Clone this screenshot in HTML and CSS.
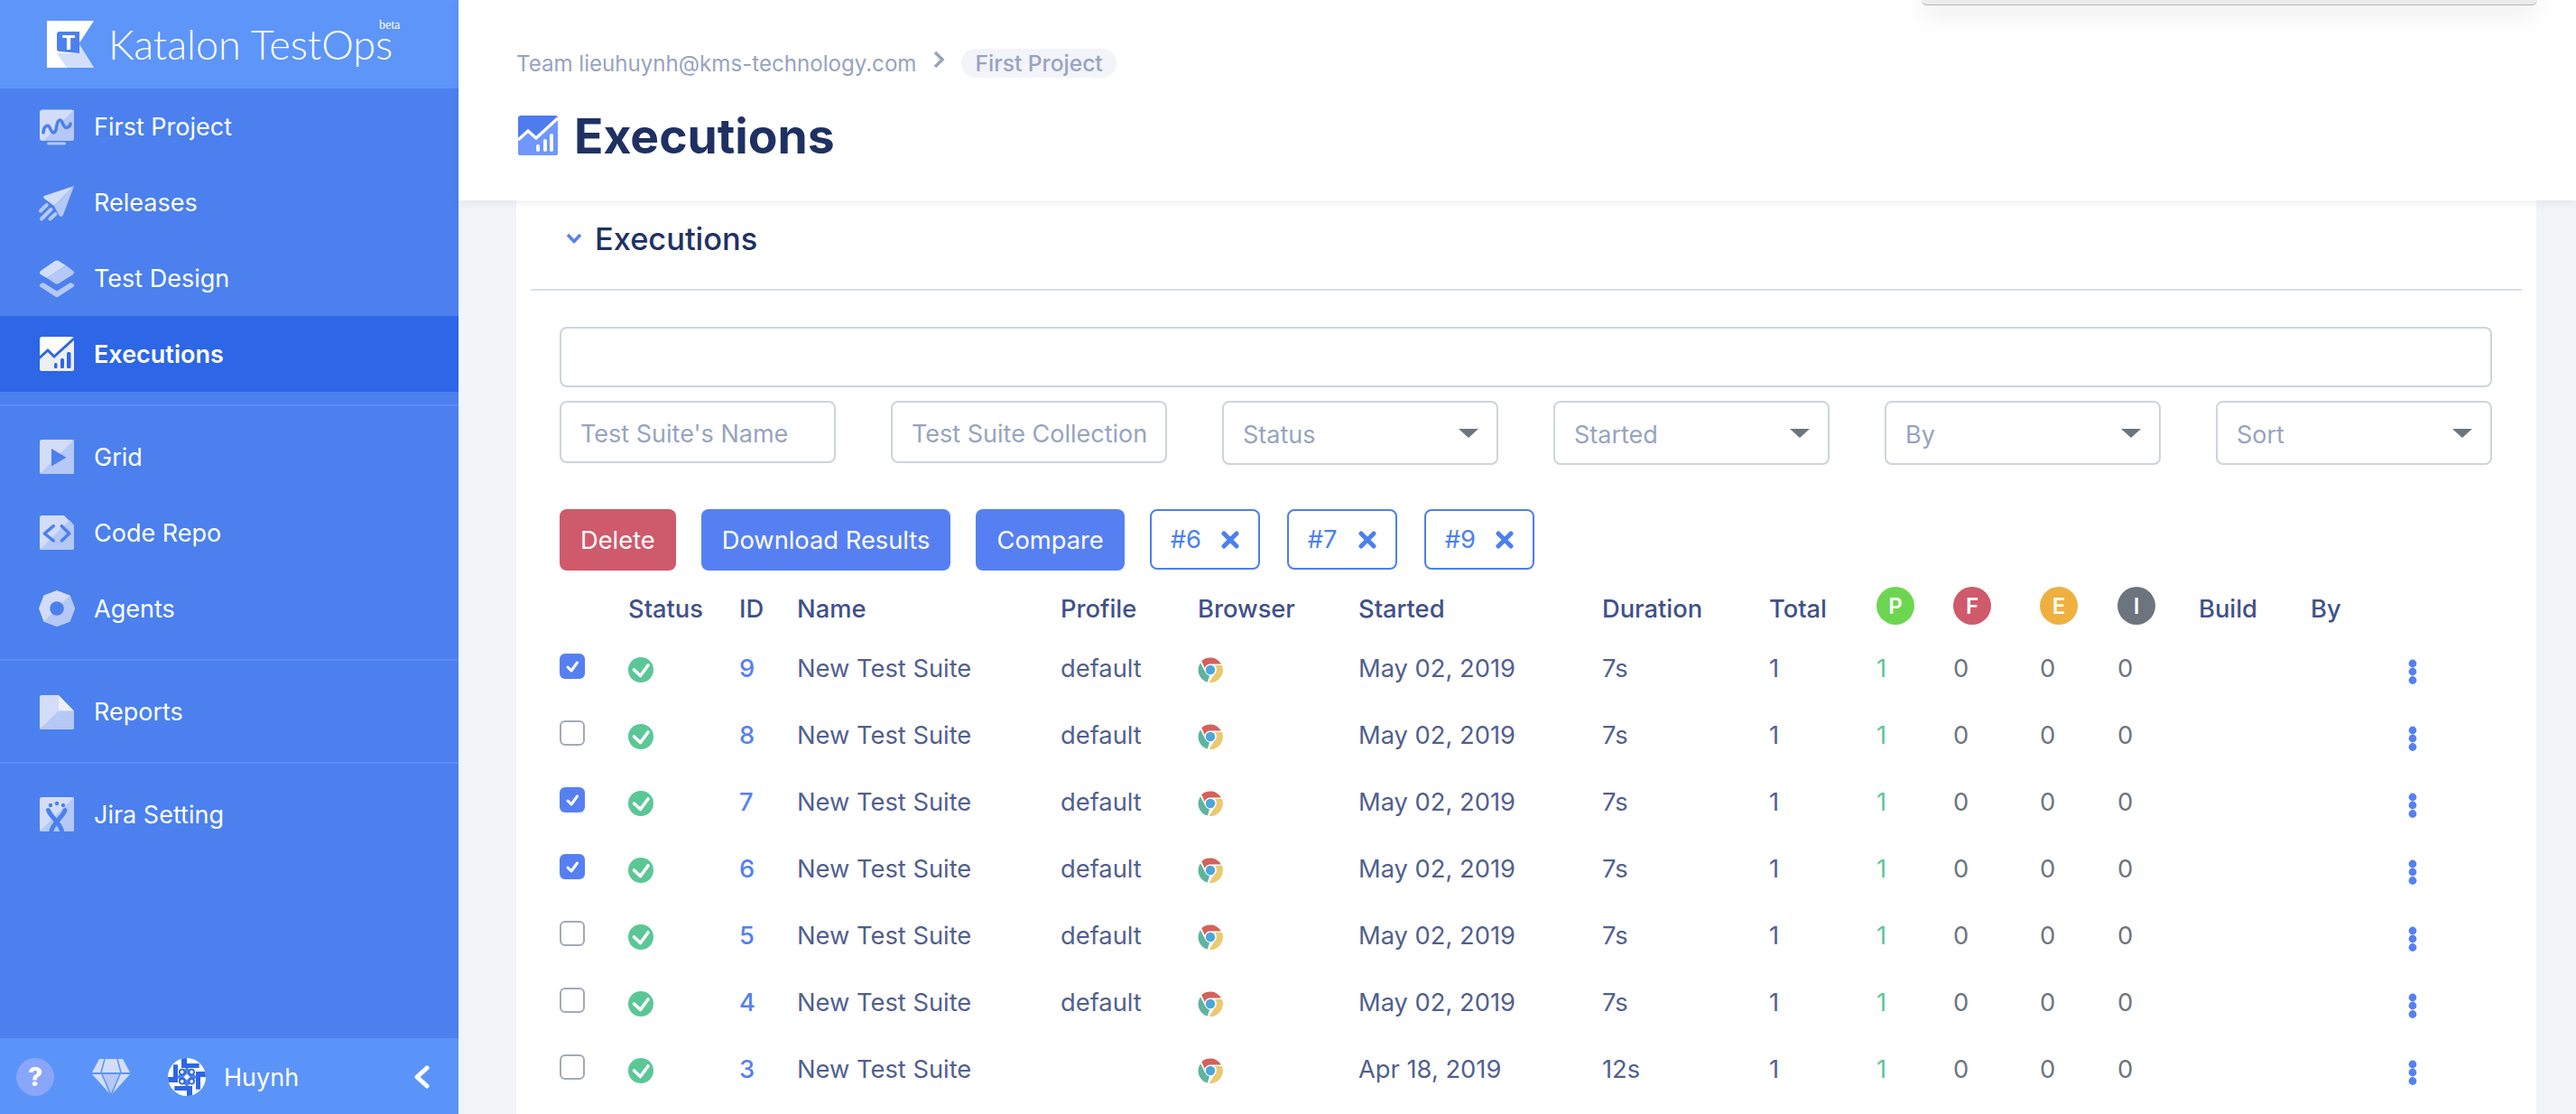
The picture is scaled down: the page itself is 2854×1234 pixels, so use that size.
FILE: index.html
```html
<!DOCTYPE html>
<html lang="en">
<head>
    <meta charset="UTF-8">
    <title>Executions - Katalon TestOps</title>
    <link rel="stylesheet" href="styles.css">
</head>
<body>
    <svg class="sprite" width="0" height="0">
        <symbol id="i-pass" viewBox="0 0 28 28">
            <circle cx="14" cy="14" r="14" fill="#5bc796"/>
            <path d="M6.5 14l7 6.5L22 9" fill="none" stroke="#fff" stroke-width="3.6" stroke-linecap="round" stroke-linejoin="round"/>
        </symbol>
        <symbol id="i-chrome" viewBox="0 0 28 28">
            <path fill="#d3625a" d="M4.2 4.3A14 14 0 0 1 26 7.5H14A6.5 6.5 0 0 0 7.8 12Z"/>
            <path fill="#5fb3a1" d="M3 6.2L8.4 16.8A6.5 6.5 0 0 0 13 20.5L10.8 27.6A14 14 0 0 1 3 6.2Z"/>
            <path fill="#ecc86f" d="M27 9A14 14 0 0 1 12.6 28L18.5 18.8A6.5 6.5 0 0 0 19 9Z"/>
            <circle cx="14" cy="14" r="5.2" fill="#4da6d8"/>
        </symbol>
        <symbol id="i-kebab" viewBox="0 0 10 28">
            <circle cx="5" cy="5" r="4.4" fill="#5680f2"/>
            <circle cx="5" cy="14" r="4.4" fill="#5680f2"/>
            <circle cx="5" cy="23.500" r="4.400" fill="#5680f2"/>
        </symbol>
        <symbol id="i-check" viewBox="0 0 28 28">
            <path d="M9 15l4 4 6.500-9" fill="none" stroke="#fff" stroke-width="3" stroke-linecap="round" stroke-linejoin="round"/>
        </symbol>
        <symbol id="i-close" viewBox="0 0 20 20">
            <path d="M3 3l14 14M17 3L3 17" fill="none" stroke="#4b80ee" stroke-width="5" stroke-linecap="round"/>
        </symbol>
        <path id="avatar-arm" fill="#2d66e6" d="M7.300 31H27V42H21V36H7.300Z"/>
    </svg>

    <aside class="sidebar">
        <div class="logo">
            <svg class="logo-mark" viewBox="0 0 52 52">
                <path fill="#fff" d="M0 0H52L35 26 52 52H0Z"/>
                <path fill="#d3dffa" d="M11 36H36V26L52 52H22Z"/>
                <path fill="#4b80ee" d="M14 12H36V36L14 34Q11 34 11 31V15Q11 12 14 12Z"/>
                <text class="logo-t" x="24" y="32">T</text>
            </svg>
            <span class="logo-name">Katalon TestOps</span>
            <span class="logo-beta">beta</span>
        </div>

        <nav class="nav-group">
            <a class="nav-item">
                <svg class="nav-icon" viewBox="0 0 40 40">
                    <rect class="tone-a" x="1" y="1.500" width="38" height="34.500" rx="3"/>
                    <path class="tone-b" d="M39 1.500L5 36H36Q39 36 39 33Z"/>
                    <rect class="tone-b" x="9" y="37.500" width="21" height="3" rx="1.500"/>
                    <path class="cut-line" d="M5 27C5 20 10 17 12 21C14 27 17 29 19 24C20 16 22 11 25 14C27 17 28 23 32 21C34 20 35 19 35 17"/>
                </svg>
                First Project
            </a>
            <a class="nav-item">
                <svg class="nav-icon" viewBox="0 0 40 40">
                    <path class="tone-a" d="M39 2L6 13Q4 14 6 16L17 24Z"/>
                    <path class="tone-b" d="M39 2L17 24L22 34Q25 38 27 34Z"/>
                    <path class="streak" d="M2 29.500L8.700 23M3 38.500L13.500 28M12.500 38.500L18.500 33"/>
                </svg>
                Releases
            </a>
            <a class="nav-item">
                <svg class="nav-icon" viewBox="0 0 40 40">
                    <path class="tone-a" d="M18 1Q20 0 22 1L30 6 9 20 2 16Q0 14 2 12Z"/>
                    <path class="tone-b" d="M30 6L38 12Q40 14 38 16L22 26Q20 27 18 26L9 20Z"/>
                    <path class="tone-b" d="M1 27L5 25L20 34.500L35 25L39 27Q40 29 38 30L21 41Q20 41.500 19 41L2 30Q0 29 1 27Z"/>
                </svg>
                Test Design
            </a>
            <a class="nav-item active">
                <svg class="nav-icon" viewBox="0 0 40 40">
                    <rect fill="#fff" x="1" y="1" width="38" height="38" rx="3"/>
                    <path fill="#eee" d="M1 24L10 15 17 22 39 2V36Q39 39 36 39H4Q1 39 1 36Z"/>
                    <path d="M0 25L10 16 17 23 39 3" fill="none" stroke="#2d66e6" stroke-width="3"/>
                    <rect fill="#2d66e6" x="17" y="30" width="3.500" height="6" rx="1.500"/>
                    <rect fill="#2d66e6" x="24" y="25" width="4" height="11" rx="1.500"/>
                    <rect fill="#2d66e6" x="31" y="18" width="4.500" height="18" rx="1.500"/>
                </svg>
                Executions
            </a>
        </nav>

        <nav class="nav-group">
            <a class="nav-item">
                <svg class="nav-icon" viewBox="0 0 40 40">
                    <rect class="tone-a" x="1" y="1" width="38" height="38" rx="2.500"/>
                    <path class="tone-b" d="M39 1L1 39H36.500Q39 39 39 36.500Z"/>
                    <path class="cut" d="M14 11L30.500 20.700 14 30.500Z"/>
                </svg>
                Grid
            </a>
            <a class="nav-item">
                <svg class="nav-icon" viewBox="0 0 40 40">
                    <path class="tone-a" d="M3.500 1H28L39 12V36.500Q39 39 36.500 39H3.500Q1 39 1 36.500V3.500Q1 1 3.500 1Z"/>
                    <path class="tone-b" d="M34 6L39 12V36.500Q39 39 36.500 39H1Z"/>
                    <path class="cut-line" d="M16.300 12.700L6.300 21 16.300 29M25.300 12.700L33.700 21 25.300 29"/>
                </svg>
                Code Repo
            </a>
            <a class="nav-item">
                <svg class="nav-icon" viewBox="0 0 40 40">
                    <path class="tone-a" d="M20 0L34.500 5.500 40 20 34.500 34.500 20 40 5.500 34.500 0 20 5.500 5.500Z"/>
                    <path class="tone-b" d="M34.500 5.500L40 20 34.500 34.500 20 40 5.500 34.500Z"/>
                    <circle class="cut" cx="20" cy="20" r="7.800"/>
                </svg>
                Agents
            </a>
        </nav>

        <nav class="nav-group">
            <a class="nav-item">
                <svg class="nav-icon" viewBox="0 0 40 40">
                    <path class="tone-a" d="M3 2H22V19.500H39V37.500Q39 40 36.500 40H3.500Q1 40 1 37.500V4Q1 2 3 2Z"/>
                    <path class="tone-b" d="M22 19.500H39V37.500Q39 40 36.500 40H1Z"/>
                    <path fill="#eef0f8" d="M22 2L39 19.500H22Z"/>
                </svg>
                Reports
            </a>
        </nav>

        <nav class="nav-group">
            <a class="nav-item">
                <svg class="nav-icon" viewBox="0 0 40 40">
                    <rect class="tone-a" x="1" y="1" width="38" height="38" rx="2.500"/>
                    <path class="tone-b" d="M39 1L1 39H36.500Q39 39 39 36.500Z"/>
                    <circle class="cut" cx="13" cy="10" r="2.200"/>
                    <circle class="cut" cx="20" cy="8" r="2.200"/>
                    <circle class="cut" cx="27" cy="10" r="2.200"/>
                    <path class="cut-line thick" d="M10.500 15.500C14 24 22 28 25.500 38M29 15.500C26 24 17 28 14 38"/>
                </svg>
                Jira Setting
            </a>
        </nav>

        <div class="sidebar-foot">
            <span class="help">?</span>
            <svg class="gem" viewBox="0 0 42 40">
                <path class="tone-a" d="M8 0H34L42 15H0Z"/>
                <path class="tone-a" d="M0 17H42L21 40Z"/>
                <path class="tone-b" d="M11 17H31L21 40Z"/>
                <path d="M14 0L10 15M28 0L32 15M11 17L21 40 31 17" fill="none" stroke="#5b94f8" stroke-width="1.500"/>
            </svg>
            <svg class="avatar" viewBox="0 0 42 42">
                <rect width="42" height="42" fill="#fff"/>
                <use href="#avatar-arm"/>
                <use href="#avatar-arm" transform="rotate(90 21 21)"/>
                <use href="#avatar-arm" transform="rotate(180 21 21)"/>
                <use href="#avatar-arm" transform="rotate(270 21 21)"/>
                <path fill="#4b80ee" d="M10 21L21 10 32 21 21 32Z"/>
                <g fill="#fff" stroke="#2d66e6" stroke-width="1.800">
                    <circle cx="15.700" cy="15.500" r="2.800"/>
                    <circle cx="26.300" cy="15.500" r="2.800"/>
                    <circle cx="15.700" cy="25.800" r="2.800"/>
                    <circle cx="26.300" cy="25.800" r="2.800"/>
                </g>
                <path fill="#fff" d="M21 17.500L24.500 21 21 24.500 17.500 21Z"/>
            </svg>
            <span class="user-name">Huynh</span>
            <svg class="collapse" viewBox="0 0 18 26">
                <path d="M15 3L4 13 15 23" fill="none" stroke="#fff" stroke-width="5" stroke-linecap="round" stroke-linejoin="round"/>
            </svg>
        </div>
    </aside>

    <main class="main">
        <header class="page-head">
            <div class="popup-edge"></div>
            <div class="crumbs">
                <span>Team lieuhuynh@kms-technology.com</span>
                <svg class="crumb-sep" viewBox="0 0 14 20">
                    <path d="M3 2L11 10 3 18" fill="none" stroke="#98a3c0" stroke-width="3.500"/>
                </svg>
                <span class="crumb-pill">First Project</span>
            </div>
            <h1 class="page-title">
                <svg class="title-icon" viewBox="0 0 44 44">
                    <rect fill="#4f7bef" width="44" height="44" rx="3"/>
                    <path fill="#6f97ff" d="M0 27L11 17 20 25 44 3V41Q44 44 41 44H3Q0 44 0 41Z"/>
                    <path d="M0 27L11 17 20 25 44 3" fill="none" stroke="#fff" stroke-width="3.500"/>
                    <rect fill="#fff" x="20" y="32" width="4" height="8" rx="2"/>
                    <rect fill="#fff" x="28" y="26" width="4" height="14" rx="2"/>
                    <rect fill="#fff" x="35" y="20" width="4" height="20" rx="2"/>
                </svg>
                Executions
            </h1>
        </header>

        <section class="card">
            <div class="card-head">
                <svg class="card-caret" viewBox="0 0 18 12">
                    <path d="M2 2L9 9.500 16 2" fill="none" stroke="#5680f2" stroke-width="3.500"/>
                </svg>
                <h2>Executions</h2>
            </div>

            <div class="card-body">
                <input class="field search" type="text">
                <div class="filters">
                    <input class="field" type="text" placeholder="Test Suite's Name">
                    <input class="field" type="text" placeholder="Test Suite Collection">
                    <div class="select"><select class="field"><option>Status</option></select></div>
                    <div class="select"><select class="field"><option>Started</option></select></div>
                    <div class="select"><select class="field"><option>By</option></select></div>
                    <div class="select"><select class="field"><option>Sort</option></select></div>
                </div>

                <div class="actions">
                    <button class="btn btn-danger">Delete</button>
                    <button class="btn">Download Results</button>
                    <button class="btn">Compare</button>
                    <span class="tag">#6 <svg class="tag-x"><use href="#i-close"/></svg></span>
                    <span class="tag">#7 <svg class="tag-x"><use href="#i-close"/></svg></span>
                    <span class="tag">#9 <svg class="tag-x"><use href="#i-close"/></svg></span>
                </div>

                <table class="runs">
                    <colgroup>
                        <col class="c-check"><col class="c-status"><col class="c-id"><col class="c-name">
                        <col class="c-profile"><col class="c-browser"><col class="c-started"><col class="c-duration">
                        <col class="c-total"><col class="c-p"><col class="c-f"><col class="c-e"><col class="c-i">
                        <col class="c-build"><col class="c-by"><col class="c-menu">
                    </colgroup>
                    <thead>
                        <tr>
                            <th></th><th>Status</th><th>ID</th><th>Name</th><th>Profile</th><th>Browser</th>
                            <th>Started</th><th>Duration</th><th>Total</th>
                            <th><span class="dot dot-p">P</span></th>
                            <th><span class="dot dot-f">F</span></th>
                            <th><span class="dot dot-e">E</span></th>
                            <th><span class="dot dot-i">I</span></th>
                            <th>Build</th><th>By</th><th></th>
                        </tr>
                    </thead>
                    <tbody>
                        <tr>
                            <td><span class="check on"><svg><use href="#i-check"/></svg></span></td>
                            <td><svg class="ico"><use href="#i-pass"/></svg></td>
                            <td class="id">9</td><td>New Test Suite</td><td>default</td>
                            <td><svg class="ico"><use href="#i-chrome"/></svg></td>
                            <td>May 02, 2019</td><td>7s</td><td>1</td>
                            <td class="pass">1</td><td class="zero">0</td><td class="zero">0</td><td class="zero">0</td>
                            <td></td><td></td><td><svg class="kebab"><use href="#i-kebab"/></svg></td>
                        </tr>
                        <tr>
                            <td><span class="check"></span></td>
                            <td><svg class="ico"><use href="#i-pass"/></svg></td>
                            <td class="id">8</td><td>New Test Suite</td><td>default</td>
                            <td><svg class="ico"><use href="#i-chrome"/></svg></td>
                            <td>May 02, 2019</td><td>7s</td><td>1</td>
                            <td class="pass">1</td><td class="zero">0</td><td class="zero">0</td><td class="zero">0</td>
                            <td></td><td></td><td><svg class="kebab"><use href="#i-kebab"/></svg></td>
                        </tr>
                        <tr>
                            <td><span class="check on"><svg><use href="#i-check"/></svg></span></td>
                            <td><svg class="ico"><use href="#i-pass"/></svg></td>
                            <td class="id">7</td><td>New Test Suite</td><td>default</td>
                            <td><svg class="ico"><use href="#i-chrome"/></svg></td>
                            <td>May 02, 2019</td><td>7s</td><td>1</td>
                            <td class="pass">1</td><td class="zero">0</td><td class="zero">0</td><td class="zero">0</td>
                            <td></td><td></td><td><svg class="kebab"><use href="#i-kebab"/></svg></td>
                        </tr>
                        <tr>
                            <td><span class="check on"><svg><use href="#i-check"/></svg></span></td>
                            <td><svg class="ico"><use href="#i-pass"/></svg></td>
                            <td class="id">6</td><td>New Test Suite</td><td>default</td>
                            <td><svg class="ico"><use href="#i-chrome"/></svg></td>
                            <td>May 02, 2019</td><td>7s</td><td>1</td>
                            <td class="pass">1</td><td class="zero">0</td><td class="zero">0</td><td class="zero">0</td>
                            <td></td><td></td><td><svg class="kebab"><use href="#i-kebab"/></svg></td>
                        </tr>
                        <tr>
                            <td><span class="check"></span></td>
                            <td><svg class="ico"><use href="#i-pass"/></svg></td>
                            <td class="id">5</td><td>New Test Suite</td><td>default</td>
                            <td><svg class="ico"><use href="#i-chrome"/></svg></td>
                            <td>May 02, 2019</td><td>7s</td><td>1</td>
                            <td class="pass">1</td><td class="zero">0</td><td class="zero">0</td><td class="zero">0</td>
                            <td></td><td></td><td><svg class="kebab"><use href="#i-kebab"/></svg></td>
                        </tr>
                        <tr>
                            <td><span class="check"></span></td>
                            <td><svg class="ico"><use href="#i-pass"/></svg></td>
                            <td class="id">4</td><td>New Test Suite</td><td>default</td>
                            <td><svg class="ico"><use href="#i-chrome"/></svg></td>
                            <td>May 02, 2019</td><td>7s</td><td>1</td>
                            <td class="pass">1</td><td class="zero">0</td><td class="zero">0</td><td class="zero">0</td>
                            <td></td><td></td><td><svg class="kebab"><use href="#i-kebab"/></svg></td>
                        </tr>
                        <tr>
                            <td><span class="check"></span></td>
                            <td><svg class="ico"><use href="#i-pass"/></svg></td>
                            <td class="id">3</td><td>New Test Suite</td><td></td>
                            <td><svg class="ico"><use href="#i-chrome"/></svg></td>
                            <td>Apr 18, 2019</td><td>12s</td><td>1</td>
                            <td class="pass">1</td><td class="zero">0</td><td class="zero">0</td><td class="zero">0</td>
                            <td></td><td></td><td><svg class="kebab"><use href="#i-kebab"/></svg></td>
                        </tr>
                    </tbody>
                </table>
            </div>
        </section>
    </main>
</body>
</html>
```

FILE: styles.css
```css
* {
    box-sizing: border-box;
}
html, body {
    height: 100%;
}
body {
    margin: 0;
    display: flex;
    height: 1234px;
    overflow: hidden;
    font-family: "Inter", "Liberation Sans", sans-serif;
    font-size: 27.3px;
    color: #525f8f;
    background-color: #f2f4f9;
}
.sprite {
    position: absolute;
}

/* sidebar */
.sidebar {
    width: 508px;
    flex: none;
    display: flex;
    flex-direction: column;
    background-color: #4b80ee;
    color: #fff;
}
.logo {
    position: relative;
    height: 98px;
    display: flex;
    align-items: center;
    padding: 0 0 0 52px;
    background-color: #5d95f9;
}
.logo-mark {
    width: 52px;
    height: 52px;
    flex: none;
}
.logo-t {
    font-family: "Inter", sans-serif;
    font-size: 22px;
    font-weight: 800;
    fill: #fff;
    text-anchor: middle;
}
.logo-name {
    margin-left: 16px;
    font-family: "Lato", sans-serif;
    font-weight: 300;
    font-size: 45px;
    line-height: 0.6;
    white-space: nowrap;
}
.logo-beta {
    position: absolute;
    left: 420px;
    top: 21px;
    font-family: "Liberation Serif", serif;
    font-size: 14px;
    line-height: 1;
}
.nav-group {
    padding: 0 0 14px;
}
.nav-group + .nav-group {
    border-top: 2px solid #5f8cf5;
    padding-top: 14px;
}
.nav-item {
    height: 84px;
    display: flex;
    align-items: center;
    padding-left: 43px;
    gap: 21px;
    font-size: 27px;
}
.nav-item.active {
    background-color: #2d66e6;
    font-weight: 600;
}
.nav-icon {
    width: 40px;
    height: 40px;
    flex: none;
    overflow: visible;
}
.tone-a {
    fill: #d3ddfa;
}
.tone-b {
    fill: #b5c8f6;
}
.cut {
    fill: #4b80ee;
}
.cut-line {
    fill: none;
    stroke: #4b80ee;
    stroke-width: 3.500;
    stroke-linecap: round;
    stroke-linejoin: round;
}
.cut-line.thick {
    stroke-width: 5;
}
.streak {
    fill: none;
    stroke: #b5c8f6;
    stroke-width: 4;
    stroke-linecap: round;
}
.sidebar-foot {
    margin-top: auto;
    height: 84px;
    display: flex;
    align-items: center;
    padding: 2px 32px 0 18px;
    background-color: #5b94f8;
}
.help {
    width: 42px;
    height: 42px;
    border-radius: 50%;
    background-color: #89a6fb;
    display: flex;
    align-items: center;
    justify-content: center;
    font-weight: 800;
    font-size: 28px;
}
.gem {
    width: 42px;
    height: 40px;
    margin-left: 42px;
}
.avatar {
    width: 42px;
    height: 42px;
    margin-left: 42px;
    border-radius: 50%;
}
.user-name {
    margin-left: 20px;
    font-size: 27px;
}
.collapse {
    width: 18px;
    height: 26px;
    margin-left: auto;
}

/* main area */
.main {
    flex: 1;
    min-width: 0;
    display: flex;
    flex-direction: column;
}
.page-head {
    position: relative;
    z-index: 1;
    height: 222px;
    flex: none;
    padding: 54px 0 0 64px;
    background-color: #fff;
    box-shadow: 0 3px 10px rgba(30, 40, 80, 0.07);
}
.popup-edge {
    position: absolute;
    top: 0;
    right: 43px;
    width: 682px;
    height: 6px;
    background-color: #ececec;
    border-bottom: 1px solid #b5b5b5;
    border-radius: 0 0 12px 12px;
    box-shadow: 0 6px 26px rgba(0, 0, 0, 0.22);
}
.crumbs {
    height: 32px;
    display: flex;
    align-items: center;
    font-size: 24.1px;
    color: #98a3c0;
}
.crumb-sep {
    width: 14px;
    height: 20px;
    margin: -8px 18px 0 18px;
}
.crumb-pill {
    padding: 0 15px;
    height: 32px;
    line-height: 32px;
    border-radius: 16px;
    background-color: #f2f4f9;
    font-size: 24.6px;
    font-weight: 500;
}
.page-title {
    margin: 42px 0 0 2px;
    display: flex;
    align-items: center;
    gap: 18px;
    height: 44px;
    font-size: 53.4px;
    font-weight: 700;
    color: #1f3163;
}
.title-icon {
    width: 44px;
    height: 44px;
    flex: none;
}
.card {
    flex: 1;
    margin: 0 44px 0 64px;
    background-color: #fff;
}
.card-head {
    height: 100px;
    margin: 0 16px;
    padding: 0 0 14px 39px;
    display: flex;
    align-items: center;
    gap: 14px;
    border-bottom: 2px solid #dadfe5;
}
.card-caret {
    width: 18px;
    height: 12px;
}
.card-head h2 {
    margin: 0;
    font-size: 34.4px;
    font-weight: 500;
    color: #1f3163;
}
.card-body {
    padding: 40px 49px 0 48px;
}
.field {
    display: block;
    width: 100%;
    height: 69px;
    padding: 3px 21px 0;
    border: 2px solid #ced4da;
    border-radius: 8px;
    background-color: #fff;
    font-family: inherit;
    font-size: 27px;
    color: #98a3c0;
    appearance: none;
}
.field::placeholder {
    color: #98a3c0;
    opacity: 1;
}
.search {
    height: 67px;
}
.filters {
    margin-top: 15px;
    display: grid;
    grid-template-columns: repeat(6, 1fr);
    gap: 61px;
}
.select {
    position: relative;
}
.select .field {
    height: 71px;
}
.select::after {
    content: "";
    position: absolute;
    right: 22px;
    top: 31px;
    border-left: 11px solid transparent;
    border-right: 11px solid transparent;
    border-top: 10px solid #6c757d;
}
.actions {
    margin-top: 49px;
    display: flex;
    align-items: flex-start;
    gap: 28px;
}
.btn {
    height: 68px;
    padding: 0 23px;
    border: none;
    border-radius: 8px;
    background-color: #5680f2;
    color: #fff;
    font-family: inherit;
    font-size: 27.3px;
}
.btn-danger {
    background-color: #cf5a6b;
}
.tag {
    width: 122px;
    height: 67px;
    display: flex;
    align-items: center;
    justify-content: space-between;
    padding: 0 21px;
    margin-right: 2px;
    border: 2px solid #4b80ee;
    border-radius: 8px;
    color: #4b80ee;
}
.tag-x {
    width: 20px;
    height: 20px;
}

/* table */
.runs {
    margin-top: 13px;
    width: 2141px;
    table-layout: fixed;
    border-collapse: collapse;
}
.c-check { width: 76px; }
.c-status { width: 123px; }
.c-id { width: 64px; }
.c-name { width: 292px; }
.c-profile { width: 152px; }
.c-browser { width: 178px; }
.c-started { width: 270px; }
.c-duration { width: 185px; }
.c-total { width: 119px; }
.c-p { width: 85px; }
.c-f { width: 96px; }
.c-e { width: 86px; }
.c-i { width: 90px; }
.c-build { width: 124px; }
.c-by { width: 108px; }
.c-menu { width: 93px; }
.runs th, .runs td {
    padding: 0;
    text-align: left;
    vertical-align: middle;
}
.runs th {
    height: 58px;
    font-weight: 500;
    color: #3f5189;
}
.runs td {
    height: 74px;
}
.id {
    font-weight: 500;
    color: #5680f2;
}
.pass {
    color: #5ac895;
}
.zero {
    color: #6c757d;
}
.dot {
    width: 42px;
    height: 42px;
    margin-bottom: 6px;
    border-radius: 50%;
    display: flex;
    align-items: center;
    justify-content: center;
    color: #fff;
    font-size: 24px;
    font-weight: 600;
}
.dot-p { background-color: #6dd651; }
.dot-f { background-color: #cf5a6b; }
.dot-e { background-color: #f0b040; }
.dot-i { background-color: #6c757d; }
.check {
    display: block;
    width: 28px;
    height: 28px;
    margin-bottom: 4px;
    border: 2px solid #a3a9b8;
    border-radius: 6px;
    background-color: #fff;
}
.check.on {
    border: none;
    background-color: #5680f2;
}
.check svg {
    display: block;
    width: 28px;
    height: 28px;
}
.ico {
    display: block;
    width: 28px;
    height: 28px;
    margin-top: 4px;
}
.kebab {
    display: block;
    width: 10px;
    height: 28px;
    margin: 8px 0 0 0;
}
```
